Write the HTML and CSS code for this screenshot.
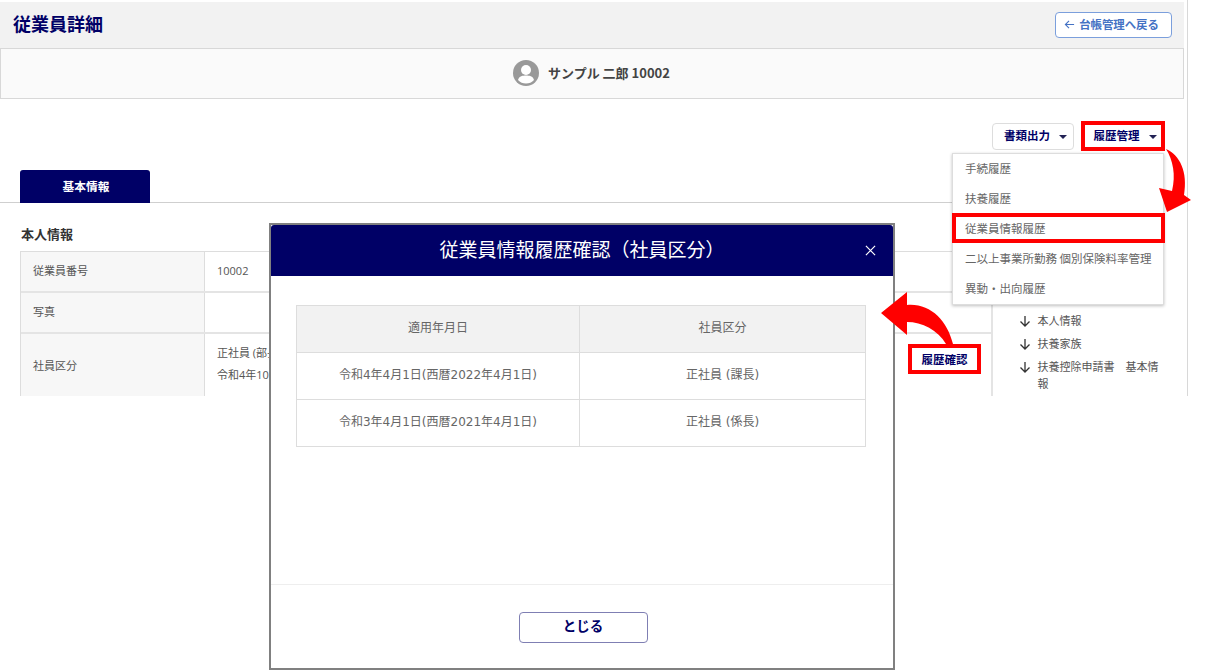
FILE: index.html
```html
<!DOCTYPE html>
<html lang="ja">
<head>
<meta charset="utf-8">
<title>従業員詳細</title>
<link rel="stylesheet" href="styles.css">
</head>
<body>
<div class="page">
  <div class="content">
    <header class="topbar">
      <h1 class="title">従業員詳細</h1>
      <a class="back">
        <svg class="back-icon" viewBox="0 0 12 12"><path d="M11 6H1.500M5.500 2 1.500 6l4 4"/></svg>
        台帳管理へ戻る
      </a>
    </header>
    <div class="person">
      <svg class="avatar" viewBox="0 0 26 26"><circle cx="13" cy="13" r="13" fill="#999"/><circle cx="13" cy="10" r="5" fill="#fff"/><path d="M5 20c1-4 5-4.500 8-4.500s7 .5 8 4.500c-2 2.500-5 3.500-8 3.500s-6-1-8-3.500z" fill="#fff"/></svg>
      <span class="person-name">サンプル 二郎 10002</span>
    </div>
    <div class="actions">
      <button class="action bordered">書類出力<i class="caret"></i></button>
      <button class="action">履歴管理<i class="caret"></i></button>
    </div>
    <div class="tabs"><div class="tab">基本情報</div></div>
    <h2 class="section">本人情報</h2>
    <div class="body">
      <div class="info">
        <div class="row r1"><div class="th">従業員番号</div><div class="td">10002</div></div>
        <div class="row r2"><div class="th">写真</div><div class="td"></div></div>
        <div class="row r3">
          <div class="th">社員区分</div>
          <div class="td stack"><p>正社員 (部長)</p><p>令和4年10月1日</p></div>
          <div class="history">履歴確認</div>
        </div>
      </div>
      <ul class="side">
        <li><svg class="down" viewBox="0 0 12 12"><path d="M6 1v10M1.500 6.500 6 11l4.500-4.500"/></svg><span>本人情報</span></li>
        <li><svg class="down" viewBox="0 0 12 12"><path d="M6 1v10M1.500 6.500 6 11l4.500-4.500"/></svg><span>扶養家族</span></li>
        <li><svg class="down" viewBox="0 0 12 12"><path d="M6 1v10M1.500 6.500 6 11l4.500-4.500"/></svg><span>扶養控除申請書　基本情報</span></li>
      </ul>
    </div>
  </div>

  <ul class="menu">
    <li>手続履歴</li>
    <li>扶養履歴</li>
    <li>従業員情報履歴</li>
    <li>二以上事業所勤務 個別保険料率管理</li>
    <li>異動・出向履歴</li>
  </ul>
</div>

<section class="modal">
  <div class="modal-head">
    <span class="modal-title">従業員情報履歴確認（社員区分）</span>
    <svg class="close" viewBox="0 0 12 12"><path d="M1 1l10 10M11 1 1 11"/></svg>
  </div>
  <div class="modal-body">
    <table class="hist">
      <tr><th>適用年月日</th><th>社員区分</th></tr>
      <tr><td>令和4年4月1日(西暦2022年4月1日)</td><td>正社員 (課長)</td></tr>
      <tr><td>令和3年4月1日(西暦2021年4月1日)</td><td>正社員 (係長)</td></tr>
    </table>
  </div>
  <div class="modal-foot"><button class="shut">とじる</button></div>
</section>

<div class="mark mark-a"></div>
<div class="mark mark-b"></div>
<div class="mark mark-c"></div>
<svg class="arrows" viewBox="0 0 1221 670">
  <path d="M1166 149C1180 155 1188 172 1184 195L1191 200 1167 212 1159 188 1172 191C1176 175 1173 160 1166 149Z"/>
  <path d="M953 344C947 320 930 303 907 305L907 292 881 313 907 335 907 322C922 322 938 330 946 344Z"/>
</svg>
</body>
</html>
```
FILE: styles.css
```css
* { box-sizing: border-box; }
html, body { margin: 0; padding: 0; height: 670px; overflow: hidden; background: #fff; }
body {
  position: relative;
  font-family: "Noto Sans CJK JP", "Noto Sans", sans-serif;
  color: #555;
  font-size: 11px;
}
.page {
  position: relative;
  width: 1188px;
  height: 396px;
  border-right: 1px solid #d8d8d8;
  overflow: hidden;
}
.content { width: 1184px; padding-top: 2px; }
.topbar {
  height: 46px;
  background: #f2f2f2;
  display: flex;
  align-items: center;
  justify-content: space-between;
  padding: 0 12px 0 13px;
}
.title { margin: 0 0 5px; font-size: 18px; line-height: 24px; font-weight: 700; color: #000066; }
.back {
  width: 117px;
  height: 26px;
  border: 1px solid #7b9fdc;
  border-radius: 4px;
  background: #fff;
  color: #4472c4;
  font-weight: 700;
  font-size: 11.400px;
  display: flex;
  align-items: center;
  justify-content: center;
  gap: 4px;
  padding: 0 4px 3px 0;
}
.back-icon { width: 11px; height: 11px; margin-top: 2px; fill: none; stroke: #4472c4; stroke-width: 1.200; }
.person {
  height: 51px;
  border: 1px solid #d8d8d8;
  background: #fafafa;
  display: flex;
  align-items: center;
  justify-content: center;
  gap: 9px;
  padding-right: 1px;
  padding-bottom: 1px;
}
.avatar { width: 26px; height: 26px; }
.person-name { font-size: 13px; font-weight: 700; color: #444; padding-bottom: 2px; }
.actions {
  display: flex;
  justify-content: flex-end;
  gap: 10px;
  padding: 24px 23px 0 0;
  height: 71px;
}
.action {
  height: 27px;
  width: 77px;
  border: 1px solid transparent;
  border-radius: 4px;
  background: #fff;
  color: #000066;
  font: 700 11.500px "Noto Sans CJK JP", sans-serif;
  padding: 0 0 3px 5px;
  display: flex;
  align-items: center;
  justify-content: center;
  gap: 9px;
}
.bordered { width: 82px; border-color: #ddd; }
.caret {
  width: 0;
  height: 0;
  margin-top: 3px;
  border-left: 4px solid transparent;
  border-right: 4px solid transparent;
  border-top: 4px solid #222255;
}
.tabs {
  width: 1164px;
  height: 33px;
  border-bottom: 1px solid #cfcfcf;
  padding-left: 20px;
}
.tab {
  width: 130px;
  height: 33px;
  background: #000066;
  border-radius: 3px 3px 0 0;
  color: #fff;
  font-size: 11.700px;
  font-weight: 700;
  display: flex;
  align-items: center;
  justify-content: center;
  padding: 0 0 2px 2px;
}
.section {
  margin: 0;
  padding: 21px 0 0 21px;
  height: 48px;
  font-size: 13px;
  line-height: 19px;
  font-weight: 700;
  color: #333;
}
.body { display: flex; align-items: flex-start; padding-left: 20px; }
.info { width: 975px; border-top: 1px solid #ddd; border-left: 1px solid #ddd; }
.row { display: flex; border-bottom: 2px solid #e4e4e4; }
.r1 { height: 41px; }
.r2 { height: 41px; }
.r3 { height: 70px; }
.th {
  width: 184px;
  background: #f7f7f7;
  border-right: 1px solid #ddd;
  padding: 0 0 3px 12px;
  display: flex;
  align-items: center;
}
.r3 .th { padding-bottom: 6px; }
.td {
  flex: 1;
  padding: 0 0 3px 12px;
  display: flex;
  align-items: center;
  font-family: "Open Sans", "Noto Sans CJK JP", sans-serif;
}
.stack { display: block; padding-top: 11px; }
.stack p { margin: 0 0 6px; line-height: 16px; }
.history {
  width: 84px;
  padding: 17px 0 0 0;
  text-align: center;
  font-weight: 700;
  font-size: 11.500px;
  color: #000066;
  white-space: nowrap;
  position: relative;
  left: -6px;
}
.side {
  list-style: none;
  margin: 0;
  padding: 61px 18px 0 26px;
  width: 193px;
  height: 145px;
  border-left: 2px solid #e4e4e4;
  margin-left: -1px;
}
.side li { display: flex; gap: 6px; margin-bottom: 6px; line-height: 17px; color: #555; }
.down { flex: none; width: 12px; height: 12px; margin-top: 3px; fill: none; stroke: #333; stroke-width: 1.300; }
.menu {
  position: absolute;
  left: 952px;
  top: 153px;
  width: 212px;
  height: 152px;
  margin: 0;
  padding: 0;
  list-style: none;
  background: #fff;
  border: 1px solid #ddd;
  box-shadow: 0 1px 3px rgba(0,0,0,.25);
  color: #666;
}
.menu li { height: 30px; line-height: 29px; padding-left: 12px; font-size: 11.500px; white-space: nowrap; }
.modal {
  position: absolute;
  left: 269px;
  top: 223px;
  width: 626px;
  height: 447px;
  border: 2px solid #808080;
  background: #fff;
  display: flex;
  flex-direction: column;
}
.modal-head {
  height: 51px;
  flex: none;
  background: #000066;
  color: #fff;
  display: flex;
  align-items: center;
  justify-content: center;
  position: relative;
  border-radius: 3px 3px 0 0;
}
.modal-title { font-size: 19px; font-weight: 400; padding-bottom: 4px; }
.close {
  position: absolute;
  right: 17px;
  top: 20px;
  width: 11px;
  height: 11px;
  fill: none;
  stroke: #fff;
  stroke-width: 1.300;
}
.modal-body { flex: 1; padding: 29px 27px 0 25px; }
.hist {
  width: 570px;
  border-collapse: collapse;
  table-layout: fixed;
  font: 12px "DejaVu Sans", "Noto Sans CJK JP", sans-serif;
  color: #666;
}
.hist th, .hist td { height: 47px; border: 1px solid #ddd; text-align: center; font-weight: 400; padding: 0 0 5px; }
.hist th { background: #f2f2f2; }
.hist th:first-child { width: 283px; }
.modal-foot {
  height: 84px;
  flex: none;
  border-top: 1px solid #eee;
  padding-top: 27px;
  display: flex;
  justify-content: center;
  align-items: flex-start;
  padding-left: 2px;
}
.shut {
  width: 129px;
  height: 31px;
  border: 1px solid #7f7fb3;
  border-radius: 4px;
  background: #fff;
  color: #000066;
  font: 700 13.500px "Noto Sans CJK JP", sans-serif;
  padding: 0 0 6px;
}
.mark { position: absolute; border: 4px solid #ff0000; }
.mark-a { left: 1081px; top: 121px; width: 84px; height: 30px; }
.mark-b { left: 952px; top: 213px; width: 213px; height: 30px; }
.mark-c { left: 908px; top: 344px; width: 73px; height: 30px; }
.arrows { position: absolute; left: 0; top: 0; width: 1221px; height: 670px; fill: #ff0000; pointer-events: none; }
```
